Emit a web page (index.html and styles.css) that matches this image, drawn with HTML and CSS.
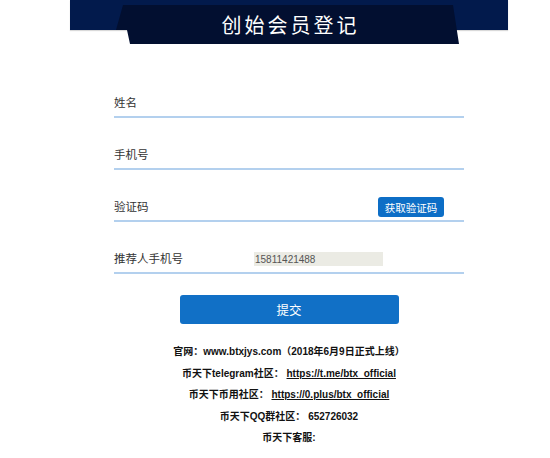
FILE: index.html
```html
<!DOCTYPE html>
<html lang="zh-CN">
<head>
  <meta charset="UTF-8">
  <title>创始会员登记</title>
  <link rel="stylesheet" href="styles.css">
</head>
<body>

  <div class="page">
    <div class="header">
      <div class="banner">
        <h2>创始会员登记</h2>
      </div>
    </div>

    <form class="reg-form" onsubmit="return false">
      <div class="row">
        <label>姓名</label>
        <input type="text" class="field" />
      </div>
      <div class="row">
        <label>手机号</label>
        <input type="text" class="field" />
      </div>
      <div class="row">
        <label>验证码</label>
        <input type="text" class="field" />
        <button type="button" class="code-btn">获取验证码</button>
      </div>
      <div class="row">
        <label class="wide">推荐人手机号</label>
        <input type="text" class="ref" value="15811421488" disabled />
      </div>
      <div class="submit-wrap">
        <button type="submit" class="submit-btn">提交</button>
      </div>
    </form>

    <div class="info">
      <p>官网：www.btxjys.com（2018年6月9日正式上线）</p>
      <p>币天下telegram社区： <a href="#">https://t.me/btx_official</a></p>
      <p>币天下币用社区： <a href="#">https://0.plus/btx_official</a></p>
      <p>币天下QQ群社区： 652726032</p>
      <p>币天下客服:</p>
    </div>
  </div>

</body>
</html>
```

FILE: styles.css
```css
body {
  margin: 0;
  background: #fff;
  font-family: "Liberation Sans", Arial, "Noto Sans CJK SC", sans-serif;
  color: #333;
}
.page {
  width: 438px;
  margin-left: 70px;
}
.header {
  height: 25px;
  padding-top: 5px;
  background: #021a4c;
  box-shadow: 0 1px 1px rgba(0, 0, 0, 0.15);
}
.banner {
  width: 343px;
  height: 39px;
  margin-left: 46px;
  background: #020f30;
  clip-path: polygon(7px 0, 337px 0, 343px 39px, 14px 39px, 11px 25px, 0 25px);
  display: flex;
  align-items: center;
  justify-content: center;
}
.banner h2 {
  margin: 0 0 0 6px;
  color: #fff;
  font-size: 20px;
  font-weight: normal;
  letter-spacing: 3px;
  font-family: "Noto Sans CJK SC", sans-serif;
}
.reg-form {
  padding: 36px 44px 0;
}
.row {
  display: flex;
  align-items: center;
  height: 28px;
  margin-top: 22px;
  border-bottom: 2px solid #b3d0ee;
}
.row label {
  width: 140px;
  font-size: 11.5px;
  font-family: "Noto Sans CJK SC", sans-serif;
  color: #333;
}
.field {
  flex: 1;
  border: none;
  outline: none;
  background: transparent;
  font-size: 12px;
  min-width: 0;
}
.code-btn {
  margin-top: 2px;
  height: 20px;
  width: 66px;
  margin-right: 20px;
  padding: 0;
  border: none;
  border-radius: 3px;
  background: #0d6ec6;
  color: #fff;
  font-size: 10.5px;
  font-family: "Noto Sans CJK SC", sans-serif;
  cursor: pointer;
}
.ref {
  width: 128px;
  height: 14px;
  padding: 0 0 0 1px;
  margin-top: 2px;
  border: none;
  background: #ebebe4;
  color: #555;
  font-size: 10px;
  font-family: "Liberation Sans", Arial, sans-serif;
}
.submit-wrap {
  display: flex;
  justify-content: center;
  margin-top: 21px;
}
.submit-btn {
  width: 219px;
  height: 29px;
  border: none;
  border-radius: 3px;
  background: #1170c6;
  color: #fff;
  font-size: 12.5px;
  font-family: "Noto Sans CJK SC", sans-serif;
  cursor: pointer;
}
.info {
  margin-top: 17px;
  text-align: center;
  font-size: 10px;
  font-weight: bold;
  color: #111;
}
.info p {
  margin: 0;
  line-height: 21.5px;
}
.info a {
  color: #111;
  text-decoration: underline;
}
```
